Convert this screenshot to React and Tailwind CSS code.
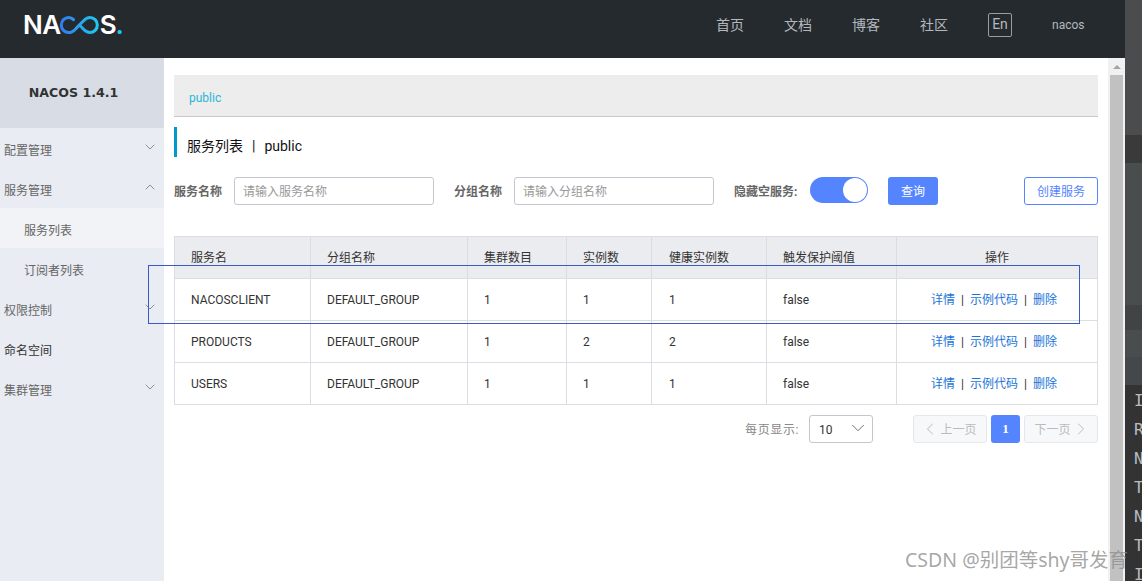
import { ChevronDown, ChevronUp, ChevronLeft, ChevronRight } from "lucide-react";

const cjk = "font-['Roboto','Noto_Sans_CJK_SC',sans-serif]";

const menu = [
  { label: "配置管理", icon: "down" },
  { label: "服务管理", icon: "up" },
  { label: "服务列表", sub: true, active: true },
  { label: "订阅者列表", sub: true },
  { label: "权限控制", icon: "down" },
  { label: "命名空间", dark: true },
  { label: "集群管理", icon: "down" },
];

const services = [
  { name: "NACOSCLIENT", instances: 1, healthy: 1 },
  { name: "PRODUCTS", instances: 2, healthy: 2 },
  { name: "USERS", instances: 1, healthy: 1 },
];

const columns = [
  { title: "服务名", width: "w-[136px]" },
  { title: "分组名称", width: "w-[157px]" },
  { title: "集群数目", width: "w-[99px]" },
  { title: "实例数", width: "w-[85px]" },
  { title: "健康实例数", width: "w-[115px] pl-[17px]" },
  { title: "触发保护阈值", width: "w-[130px]" },
  { title: "操作", width: "w-[201px]", center: true },
];

function Logo() {
  return (
    <div className="flex items-center -mt-2 text-white font-['Inter',sans-serif] font-semibold text-[26px] leading-none">
      <span className="tracking-[-0.5px] -ml-[1px]">NA</span>
      <svg width="41" height="20" viewBox="0 0 40 20" fill="none" className="-ml-[2px]">
        <defs>
          <linearGradient id="loop" x1="0" y1="0" x2="1" y2="0">
            <stop offset="0" stopColor="#2f7df0" />
            <stop offset="1" stopColor="#1fc8ee" />
          </linearGradient>
        </defs>
        <path
          d="M14 4.6C12.6 3.2 11 2.4 9.2 2.4 5 2.4 1.8 5.7 1.8 10s3.2 7.6 7.4 7.6c3 0 5.2-1.8 7.4-4.2l7.2-7.4c2-2.2 4-3.6 6.6-3.6 4.2 0 7.4 3.3 7.4 7.6s-3.2 7.6-7.4 7.6c-2.6 0-4.6-1.4-6.6-3.6L21 11"
          stroke="url(#loop)"
          strokeWidth="3"
          strokeLinecap="round"
        />
      </svg>
      <span>S</span>
      <span className="text-[#1fc8ee] -ml-[1px]">.</span>
    </div>
  );
}

function Header() {
  return (
    <div className={`h-[58px] shrink-0 bg-[#252a2f] flex items-center justify-between pl-6 ${cjk}`}>
      <Logo />
      <div className="flex items-center text-sm text-[#b4b8bc] mr-[39px] -mt-2">
        <div className="flex gap-10 mr-10">
          <span>首页</span>
          <span>文档</span>
          <span>博客</span>
          <span>社区</span>
        </div>
        <span className="w-6 h-6 flex items-center justify-center border border-[#9a9ea2] rounded-[2px] text-sm leading-none pb-[2px]">
          En
        </span>
        <span className="ml-10 text-xs w-[34px]">nacos</span>
      </div>
    </div>
  );
}

function Sidebar() {
  return (
    <div className={`w-[164px] shrink-0 bg-[#e9ecf2] ${cjk}`}>
      <div className="h-[70px] bg-[#d8dde5] flex items-center justify-center pr-[17px] font-['DejaVu_Sans',sans-serif] font-bold text-[12.6px] text-[#333]">
        NACOS 1.4.1
      </div>
      {menu.map((item) => (
        <div
          key={item.label}
          className={`h-10 flex items-center justify-between pr-[6px] pt-[6px] text-xs ${item.sub ? "pl-6" : "pl-1"} ${item.active ? "bg-[#f2f3f7]" : ""} ${item.dark ? "text-[#333]" : "text-[#666]"}`}
        >
          <span>{item.label}</span>
          {item.icon === "down" && <ChevronDown size={16} strokeWidth={1.4} className="text-[#888] -mt-[8px]" />}
          {item.icon === "up" && <ChevronUp size={16} strokeWidth={1.4} className="text-[#888] -mt-[8px]" />}
        </div>
      ))}
    </div>
  );
}

function SearchField({ label, placeholder }) {
  return (
    <>
      <span className="text-xs font-bold text-[#666] w-[60px] shrink-0 pt-[2px]">{label}</span>
      <input
        placeholder={placeholder}
        className="w-[200px] h-7 shrink-0 px-2 pt-[2px] border border-[#c4c6cf] rounded-[3px] text-xs bg-white placeholder:text-[#999] outline-none"
      />
    </>
  );
}

function SearchBar() {
  return (
    <div className="mt-5 flex items-center h-7">
      <SearchField label="服务名称" placeholder="请输入服务名称" />
      <div className="w-5 shrink-0" />
      <SearchField label="分组名称" placeholder="请输入分组名称" />
      <span className="ml-5 text-xs font-bold text-[#666] w-[76px] shrink-0 pt-[2px]">隐藏空服务:</span>
      <div className="w-[58px] h-[26px] -mt-[2px] shrink-0 rounded-full bg-[#5584ff] flex items-center justify-end pr-[1px]">
        <div className="w-6 h-6 rounded-full bg-white" />
      </div>
      <button className="ml-5 w-[50px] h-7 pt-[2px] rounded-[3px] bg-[#5584ff] text-white text-xs">查询</button>
      <button className="ml-auto w-[74px] h-7 pt-[2px] rounded-[3px] border border-[#5584ff] text-[#5584ff] bg-white text-xs">
        创建服务
      </button>
    </div>
  );
}

function ServiceTable() {
  return (
    <table className="mt-[31px] w-[923px] table-fixed border-collapse text-xs text-[#333]">
      <thead>
        <tr className="h-[42px] bg-[#ebecf0]">
          {columns.map((col) => (
            <th
              key={col.title}
              className={`${col.width} border border-[#dcdde3] px-4 font-normal ${col.center ? "text-center" : "text-left"}`}
            >
              {col.title}
            </th>
          ))}
        </tr>
      </thead>
      <tbody>
        {services.map((row) => (
          <tr key={row.name} className="h-[42px]">
            <td className="border border-[#dcdde3] px-4">{row.name}</td>
            <td className="border border-[#dcdde3] px-4">DEFAULT_GROUP</td>
            <td className="border border-[#dcdde3] px-4">1</td>
            <td className="border border-[#dcdde3] px-4">{row.instances}</td>
            <td className="border border-[#dcdde3] pl-[17px] pr-4">{row.healthy}</td>
            <td className="border border-[#dcdde3] px-4">false</td>
            <td className="border border-[#dcdde3] pl-[10px] pr-4 text-center">
              <a className="text-[#1a74d8]">详情</a>
              <span className="mx-[6px]">|</span>
              <a className="text-[#1a74d8]">示例代码</a>
              <span className="mx-[6px]">|</span>
              <a className="text-[#1a74d8]">删除</a>
            </td>
          </tr>
        ))}
      </tbody>
    </table>
  );
}

function Pagination() {
  return (
    <div className="mt-[10px] flex items-center justify-end h-7 text-xs">
      <span className="text-[#888] mr-[10px] pt-[2px] tracking-[0.6px]">每页显示:</span>
      <div className="w-16 h-7 mr-10 border border-[#c4c6cf] rounded-[3px] flex items-center justify-between pl-[9px] pr-[3px] text-[#333]">
        <span className="pt-[2px]">10</span>
        <ChevronDown size={22} strokeWidth={1} className="text-[#666] -mt-[2px]" />
      </div>
      <div className="w-[74px] h-7 border border-[#e6e7eb] bg-[#f7f8fa] rounded-[3px] flex items-center justify-center text-[#bbb]">
        <ChevronLeft size={20} strokeWidth={1.2} className="-ml-[3px]" />
        <span className="pt-[2px]">上一页</span>
      </div>
      <div className="ml-1 w-[29px] h-7 bg-[#5584ff] rounded-[3px] flex items-center justify-center text-white font-['Liberation_Serif',serif] font-bold text-[13px]">
        1
      </div>
      <div className="ml-1 w-[74px] h-7 border border-[#e6e7eb] bg-[#f7f8fa] rounded-[3px] flex items-center justify-center text-[#bbb]">
        <span className="pt-[2px]">下一页</span>
        <ChevronRight size={20} strokeWidth={1.2} className="-mr-[3px]" />
      </div>
    </div>
  );
}

function Scrollbar() {
  return (
    <div className="w-[17px] shrink-0 bg-[#f1f1f1] flex flex-col items-center">
      <div className="h-[17px] flex items-center justify-center">
        <div className="w-0 h-0 border-x-[4px] border-x-transparent border-b-[4px] border-b-[#a3a3a3]" />
      </div>
      <div className="w-[13px] flex-1 bg-[#c1c1c1]" />
    </div>
  );
}

function Console() {
  const blocks = [
    "h-[135px] bg-[#4a4c4d]",
    "h-[28px] bg-[#3a3a3a]",
    "h-[142px] bg-[#4a4d4e]",
    "h-[25px] bg-[#414345]",
    "h-[27px] bg-[#4a4d4e]",
    "h-[28px] bg-[#45484a]",
  ];
  return (
    <div className="w-[17px] shrink-0 overflow-hidden flex flex-col bg-[#333]">
      {blocks.map((b) => (
        <div key={b} className={`${b} shrink-0`} />
      ))}
      <div className="pl-[9px] pt-[1px] font-['DejaVu_Sans_Mono',monospace] text-base leading-[29px] text-[#b9bcc0]">
        {["I", "R", "N", "T", "N", "T", "I"].map((c, i) => (
          <div key={i}>{c}</div>
        ))}
      </div>
    </div>
  );
}

export default function App() {
  return (
    <div className={`relative w-[1142px] h-[581px] overflow-hidden flex bg-white ${cjk}`}>
      <div className="w-[1125px] flex flex-col">
        <Header />
        <div className="flex-1 flex min-h-0">
          <Sidebar />
          <div className="flex-1 flex min-w-0">
            <div className="flex-1 min-w-0 px-[10px] pt-[17px]">
              <div className="h-[42px] bg-[#ededed] border-b border-[#c9c9c9] pl-[15px] flex items-center pt-1 text-xs text-[#2cb5d8]">
                public
              </div>
              <div className="mt-[10px] h-[30px] border-l-[3px] border-[#0099cc] pl-[10px] pt-2 flex items-center text-sm text-[#111]">
                服务列表
                <span className="mx-[9px]">|</span>
                public
              </div>
              <SearchBar />
              <ServiceTable />
              <Pagination />
            </div>
            <Scrollbar />
          </div>
        </div>
      </div>
      <Console />
      <div className="absolute left-[148px] top-[265px] w-[932px] h-[59px] border border-[#3a5bc7]" />
      <div className="absolute left-[905px] top-[546px] text-[19.5px] leading-[28px] text-[#8f8f8f]/80 whitespace-nowrap font-['Noto_Sans','Noto_Sans_CJK_SC',sans-serif]">
        CSDN @别团等shy哥发育
      </div>
    </div>
  );
}
